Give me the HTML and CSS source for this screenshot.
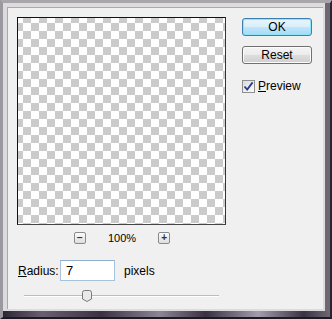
FILE: index.html
```html
<!DOCTYPE html>
<html lang="en">
<head>
    <meta charset="UTF-8">
    <title>Gaussian Blur</title>
    <link rel="stylesheet" href="styles.css">
</head>
<body>
    <div class="window">
        <div class="pane">
            <div class="dialog">
                <div class="top">
                    <div class="preview-col">
                        <div class="preview"></div>
                        <div class="zoom-bar">
                            <span class="zoom-btn">&minus;</span>
                            <span class="zoom-level">100%</span>
                            <span class="zoom-btn">+</span>
                        </div>
                    </div>
                    <div class="actions">
                        <button type="button" class="btn btn-primary">OK</button>
                        <button type="button" class="btn">Reset</button>
                        <label class="check">
                            <span class="check-box">
                                <svg width="11" height="11" viewBox="0 0 11 11"><path d="M1.5 5.5 L4.2 8.6 L9.6 1.4" fill="none" stroke="#2a3b8f" stroke-width="1.8"/></svg>
                            </span>
                            <span><u>P</u>review</span>
                        </label>
                    </div>
                </div>
                <div class="radius-row">
                    <label class="radius-label" for="radius"><u>R</u>adius:</label>
                    <input id="radius" class="radius-input" type="text" value="7">
                    <span class="unit">pixels</span>
                </div>
                <div class="slider">
                    <div class="slider-track"></div>
                    <svg class="slider-thumb" width="10" height="12" viewBox="0 0 10 12">
                        <path d="M0.5 2.5 Q0.5 0.5 2.5 0.5 L7.5 0.5 Q9.5 0.5 9.5 2.5 L9.5 9 L5 11.5 L0.5 9 Z" fill="#e9e9e9" stroke="#7a7a7a"/>
                    </svg>
                </div>
            </div>
        </div>
    </div>
</body>
</html>
```

FILE: styles.css
```css
body {
    margin: 0;
    background-color: #f0f0f0;
    font-family: "Liberation Sans", Arial, sans-serif;
    font-size: 12px;
    color: #000;
}
.window {
    width: 332px;
    height: 319px;
    box-sizing: border-box;
    border-left: 3px solid #9b98a0;
    border-top: 3px solid #a8a6ab;
    border-right: 2px solid #2b2430;
    border-bottom: 2px solid #1e1822;
    padding: 0 5px 6px 0;
    background: linear-gradient(to right, #2e2535, #6a5f70 12%, #3b3142 30%, #8d8494 48%, #3a3040 62%, #a49cab 78%, #3b3142 92%, #6e6873) bottom / 100% 6px no-repeat, #6e6873;
    display: flex;
}
.pane {
    flex: 1;
    background-color: #dcdcdf;
    padding: 4px 2px 2px 4px;
    display: flex;
}
.dialog {
    flex: 1;
    background-color: #f0f0f0;
    border-left: 1px solid #a9a9ad;
    border-top: 1px solid #a9a9ad;
    padding: 9px 0 0 9px;
}
.top {
    display: flex;
}
.preview-col {
    width: 209px;
}
.preview {
    width: 209px;
    height: 208px;
    box-sizing: border-box;
    border: 1px solid #111;
    border-right-color: #333;
    border-bottom-color: #444;
    background-color: #fff;
    background-image: conic-gradient(#cbcbcb 25%, #fff 0 50%, #cbcbcb 0 75%, #fff 0);
    background-size: 16px 16px;
    background-position: -3px -3px;
}
.zoom-bar {
    display: flex;
    justify-content: center;
    align-items: center;
    gap: 22px;
    margin-top: 7px;
    height: 12px;
    padding-left: 1px;
}
.zoom-btn {
    width: 10px;
    height: 10px;
    border: 1px solid #8a8a8a;
    border-radius: 2px;
    background: linear-gradient(#fbfbfb, #dedede);
    font-size: 10px;
    line-height: 10px;
    text-align: center;
    font-weight: bold;
    color: #333;
}
.zoom-level {
    font-size: 11px;
}
.actions {
    margin-left: 16px;
    padding-top: 1px;
    display: flex;
    flex-direction: column;
}
.btn {
    width: 70px;
    height: 18px;
    margin: 0 0 10px 0;
    padding: 0;
    font-family: "Liberation Sans", Arial, sans-serif;
    font-size: 12px;
    color: #000;
    border: 1px solid #707070;
    border-radius: 3px;
    background: linear-gradient(#f4f4f4 0, #ebebeb 50%, #dddddd 51%, #cfcfcf 100%);
    box-shadow: inset 0 0 0 1px #fbfbfb;
}
.btn-primary {
    border-color: #3c7fb1;
    background: linear-gradient(#e8f5fc 0, #d9eff9 50%, #bee6fd 51%, #a7d9f5 100%);
    box-shadow: inset 0 0 0 1px #8ee4f8;
}
.check {
    display: flex;
    align-items: center;
    gap: 3px;
    margin-top: 5px;
}
.check-box {
    width: 11px;
    height: 11px;
    border: 1px solid #8e8f8f;
    background: linear-gradient(135deg, #dcdcdc, #fbfbfb);
    display: flex;
}
.radius-row {
    display: flex;
    align-items: center;
    margin-top: 16px;
    padding-left: 1px;
}
.radius-label {
    width: 42px;
}
.radius-input {
    width: 55px;
    height: 21px;
    box-sizing: border-box;
    border: 1px solid #a7c3da;
    border-top-color: #8fb0cc;
    padding: 0 5px;
    font-family: "Liberation Sans", Arial, sans-serif;
    font-size: 13px;
    background-color: #fff;
    outline: none;
}
.unit {
    margin-left: 9px;
}
.slider {
    position: relative;
    width: 195px;
    height: 12px;
    margin: 9px 0 0 7px;
}
.slider-track {
    position: absolute;
    left: 0;
    right: 0;
    top: 5px;
    height: 1px;
    background-color: #bdbdbd;
    border-bottom: 1px solid #fff;
}
.slider-thumb {
    position: absolute;
    left: 58px;
    top: 0;
}
```
